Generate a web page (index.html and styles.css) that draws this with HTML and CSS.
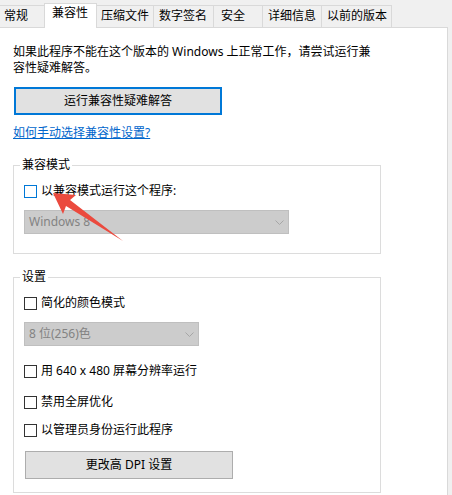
FILE: index.html
```html
<!DOCTYPE html>
<html lang="zh-CN">
<head>
    <meta charset="UTF-8">
    <title>属性 - 兼容性</title>
    <link rel="stylesheet" href="styles.css">
</head>
<body>
    <div class="tabs">
        <div class="tab tab-first">常规</div>
        <div class="tab active">兼容性</div>
        <div class="tab tab-narrow">压缩文件</div>
        <div class="tab tab-wide">数字签名</div>
        <div class="tab tab-short">安全</div>
        <div class="tab">详细信息</div>
        <div class="tab tab-last">以前的版本</div>
    </div>

    <div class="panel">
        <p class="intro">如果此程序不能在这个版本的 Windows 上正常工作，请尝试运行兼<br>容性疑难解答。</p>
        <button type="button" class="btn btn-focus">运行兼容性疑难解答</button>
        <a href="#" class="help-link">如何手动选择兼容性设置?</a>

        <fieldset class="group group-compat">
            <legend>兼容模式</legend>
            <label class="check"><input type="checkbox" class="hover"> 以兼容模式运行这个程序:</label>
            <div class="combo combo-wide">
                <span>Windows 8</span>
                <svg width="9" height="5" viewBox="0 0 9 5"><path d="M0.5 0.5 L4.5 4.5 L8.5 0.5" fill="none" stroke="#a6a6a6" stroke-width="1"/></svg>
            </div>
        </fieldset>

        <fieldset class="group group-settings">
            <legend>设置</legend>
            <label class="check"><input type="checkbox"> 简化的颜色模式</label>
            <div class="combo combo-narrow">
                <span>8 位(256)色</span>
                <svg width="9" height="5" viewBox="0 0 9 5"><path d="M0.5 0.5 L4.5 4.5 L8.5 0.5" fill="none" stroke="#a6a6a6" stroke-width="1"/></svg>
            </div>
            <label class="check check-after-combo"><input type="checkbox"> 用 640 x 480 屏幕分辨率运行</label>
            <label class="check check-spaced"><input type="checkbox"> 禁用全屏优化</label>
            <label class="check check-tight"><input type="checkbox"> 以管理员身份运行此程序</label>
            <button type="button" class="btn btn-dpi">更改高 DPI 设置</button>
        </fieldset>
    </div>

    <!-- red annotation arrow pointing at the checkbox -->
    <svg class="arrow" width="452" height="495" viewBox="0 0 452 495">
        <polygon points="53,193 76,195 70,200 123,241 66,206 63,214" fill="#eb4a3e"/>
    </svg>
</body>
</html>
```

FILE: styles.css
```css
body {
    margin: 0;
    width: 452px;
    height: 495px;
    overflow: hidden;
    position: relative;
    background: #f0f0f0;
    font-family: "Noto Sans", "Noto Sans CJK SC", sans-serif;
    font-size: 12px;
    line-height: 16px;
    color: #000;
}
.tabs {
    display: flex;
    align-items: flex-end;
    height: 27px;
    margin-left: -8px;
}
.tab {
    height: 21px;
    line-height: 20px;
    padding: 0 5px;
    background: #f0f0f0;
    border: 1px solid #d9d9d9;
    border-bottom: none;
    border-right: none;
}
.tab-first {
    width: 40px;
    padding: 0 0 0 11px;
}
.tab-narrow {
    padding: 0 4px;
}
.tab-wide {
    padding: 0 6px 0 5px;
}
.tab-short {
    width: 41px;
    padding: 0 0 0 7px;
}
.tab-last {
    padding: 0 4px 0 5px;
    border-right: 1px solid #d9d9d9;
}
.tab.active {
    position: relative;
    z-index: 1;
    height: 24px;
    line-height: 18px;
    margin-bottom: -1px;
    padding: 0 8px 0 7px;
    background: #fff;
    border-right: 1px solid #d9d9d9;
    margin-right: -1px;
}
.panel {
    box-sizing: border-box;
    width: 449px;
    min-height: 480px;
    margin-left: -1px;
    padding: 16px 12px 0 13px;
    background: #fff;
    border: 1px solid #d9d9d9;
}
.intro {
    margin: 0;
    white-space: nowrap;
}
.btn {
    display: block;
    box-sizing: border-box;
    width: 208px;
    height: 28px;
    padding: 0;
    font: inherit;
    color: #000;
    background: #e1e1e1;
    border: 1px solid #adadad;
}
.btn-focus {
    margin: 11px 0 0 1px;
    border: 2px solid #0078d7;
}
.help-link {
    display: inline-block;
    margin-top: 10px;
    color: #0066cc;
}
.group {
    box-sizing: border-box;
    width: 368px;
    margin: 16px 0 0;
    padding: 10px 10px 19px 10px;
    border: 1px solid #dcdcdc;
}
.group legend {
    margin-left: -4px;
    padding: 0 2px;
}
.group-settings {
    margin-top: 15px;
    padding-bottom: 13px;
}
.check {
    display: flex;
    align-items: center;
    gap: 4px;
    height: 16px;
}
.check input {
    appearance: none;
    box-sizing: border-box;
    width: 13px;
    height: 13px;
    margin: 0;
    background: #fff;
    border: 1px solid #333;
}
.check input.hover {
    border-color: #0078d7;
}
.combo {
    box-sizing: border-box;
    display: flex;
    align-items: center;
    justify-content: space-between;
    height: 24px;
    margin-top: 11px;
    padding: 0 4px 0 4px;
    color: #838383;
    background: #cccccc;
    border: 1px solid #bfbfbf;
}
.combo-wide {
    width: 265px;
}
.combo-narrow {
    width: 175px;
}
.check-after-combo {
    margin-top: 17px;
}
.check-spaced {
    margin-top: 15px;
}
.check-tight {
    margin-top: 12px;
}
.btn-dpi {
    margin: 13px 0 0 1px;
}
.arrow {
    position: absolute;
    left: 0;
    top: 0;
    pointer-events: none;
}
```
